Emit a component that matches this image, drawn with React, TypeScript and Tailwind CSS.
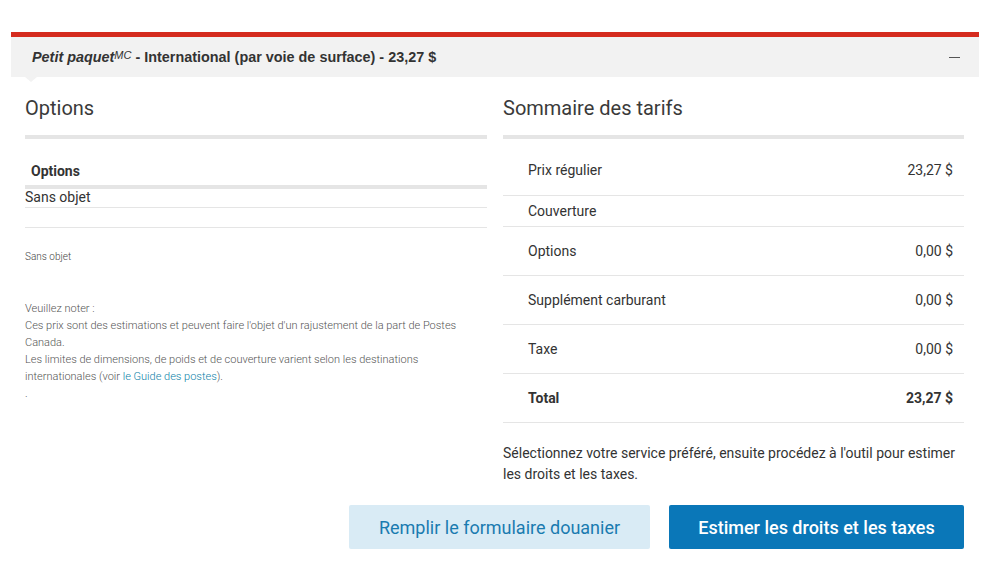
import React from 'react';

const rows = [
  { label: 'Prix régulier', value: '23,27 $', h: 'h-[57px] pt-[6px]' },
  { label: 'Couverture', value: '', h: 'h-[31px]' },
  { label: 'Options', value: '0,00 $', h: 'h-[49px]' },
  { label: 'Supplément carburant', value: '0,00 $', h: 'h-[49px]' },
  { label: 'Taxe', value: '0,00 $', h: 'h-[49px]' },
];

export default function App() {
  return (
    <div className="min-h-[581px] w-[985px] bg-white pt-[32px] font-['Roboto',sans-serif] text-[#333]">
      <div className="ml-[11px] w-[968px]">
        <div className="h-[5px] bg-[#d52b1e]" />
        <div className="relative flex h-[40px] items-center justify-between bg-[#f2f2f2] pl-[21px] pr-[19px] pt-[1px] font-['Liberation_Sans',Arial,sans-serif] text-[14.4px] font-bold text-[#333]">
          <div>
            <i>Petit paquet</i>
            <sup className="relative -top-[3px] text-[11px] italic font-normal">MC</sup> - International (par voie de surface) - 23,27 $
          </div>
          <div className="h-[1.5px] w-[11px] bg-[#555]" />
          <div className="absolute left-[14px] top-[40px] h-0 w-0 border-x-[6px] border-t-[5px] border-x-transparent border-t-[#f2f2f2]" />
        </div>

        <div className="flex gap-[16px] px-[14px] pt-[17px]">
          <div className="w-[462px]">
            <h2 className="text-[20px] leading-[28px] text-[#3a3a3a]">Options</h2>
            <div className="mt-[13px] h-[4px] bg-[#e5e5e5]" />
            <div className="mt-[22px] pl-[6px] text-[14px] font-bold leading-[20px]">Options</div>
            <div className="mt-[4px] h-[4px] bg-[#e5e5e5]" />
            <div className="border-b border-[#e5e5e5] pb-[1px] text-[14px] leading-[17px]">Sans objet</div>
            <div className="h-[20px] border-b border-[#e5e5e5]" />
            <div className="mt-[22px] text-[10px] font-light leading-[14px] text-[#444]">Sans objet</div>
            <div className="mt-[36px] text-[11px] font-light leading-[17px] text-[#555]">
              <p>Veuillez noter :</p>
              <p>Ces prix sont des estimations et peuvent faire l'objet d'un rajustement de la part de Postes Canada.</p>
              <p>
                Les limites de dimensions, de poids et de couverture varient selon les destinations internationales (voir{' '}
                <a className="text-[#0b7fa8]">le Guide des postes</a>).
              </p>
              <p>.</p>
            </div>
          </div>

          <div className="w-[461px]">
            <h2 className="text-[20px] leading-[28px] text-[#3a3a3a]">Sommaire des tarifs</h2>
            <div className="mt-[13px] h-[4px] bg-[#e5e5e5]" />
            {rows.map((r) => (
              <div
                key={r.label}
                className={`flex items-center justify-between border-b border-[#e5e5e5] pl-[25px] pr-[11px] text-[14px] ${r.h}`}
              >
                <span>{r.label}</span>
                <span>{r.value}</span>
              </div>
            ))}
            <div className="flex h-[49px] items-center justify-between border-b border-[#e5e5e5] pl-[25px] pr-[11px] text-[14px] font-bold">
              <span>Total</span>
              <span>23,27 $</span>
            </div>
            <p className="mt-[20px] text-[14px] leading-[21px] text-[#333]">
              Sélectionnez votre service préféré, ensuite procédez à l'outil pour estimer les droits et les taxes.
            </p>
          </div>
        </div>

        <div className="mt-[20px] flex justify-end gap-[19px] pr-[15px]">
          <button className="h-[44px] w-[301px] rounded-[2px] bg-[#d9ebf5] text-[18px] text-[#1a7bb0]">
            Remplir le formulaire douanier
          </button>
          <button className="h-[44px] w-[295px] rounded-[2px] bg-[#0a77b8] text-[18px] font-medium text-white">
            Estimer les droits et les taxes
          </button>
        </div>
      </div>
    </div>
  );
}
